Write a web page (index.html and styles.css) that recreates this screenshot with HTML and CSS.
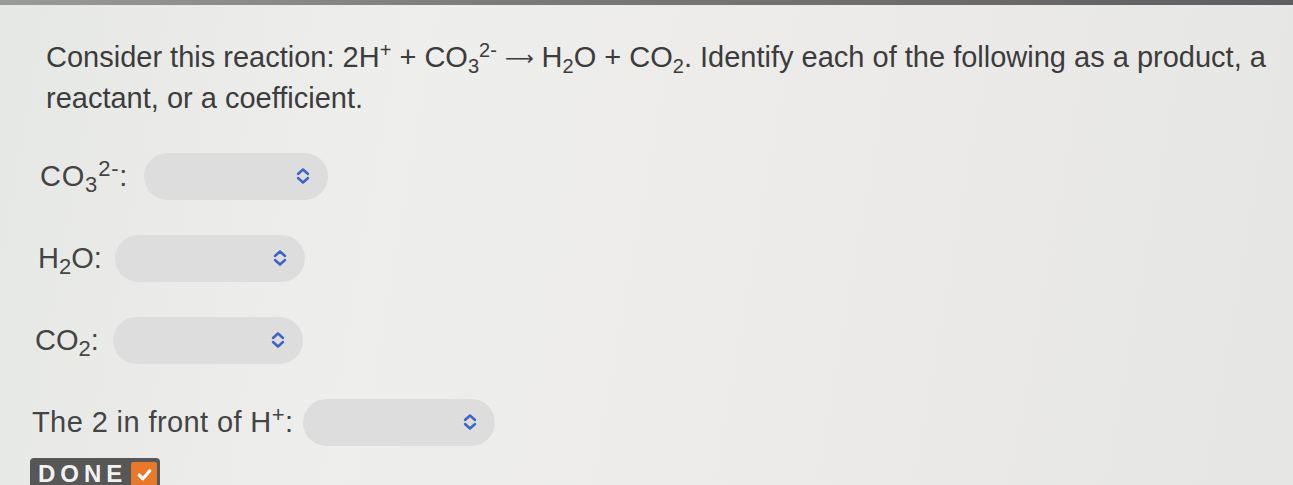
FILE: index.html
```html
<!DOCTYPE html>
<html>
<head>
<meta charset="utf-8">
<link rel="stylesheet" href="styles.css">
</head>
<body>
<div class="topbar"></div>
<main class="page">
  <p class="question">Consider this reaction: 2H<sup>+</sup> + CO<sub>3</sub><sup>2-</sup> <span class="arrow">⟶</span> H<sub>2</sub>O + CO<sub>2</sub>. Identify each of the following as a product, a reactant, or a coefficient.</p>

  <div class="row row-1">
    <span class="label">CO<sub>3</sub><sup>2-</sup>:</span>
    <div class="select">
      <svg class="chev" viewBox="0 0 14 18" width="14" height="18"><path d="M2 7 L7 2.5 L12 7 M2 11 L7 15.5 L12 11" fill="none" stroke="#3d63c4" stroke-width="2.4" stroke-linecap="round" stroke-linejoin="round"/></svg>
    </div>
  </div>

  <div class="row row-2">
    <span class="label">H<sub>2</sub>O:</span>
    <div class="select">
      <svg class="chev" viewBox="0 0 14 18" width="14" height="18"><path d="M2 7 L7 2.5 L12 7 M2 11 L7 15.5 L12 11" fill="none" stroke="#3d63c4" stroke-width="2.4" stroke-linecap="round" stroke-linejoin="round"/></svg>
    </div>
  </div>

  <div class="row row-3">
    <span class="label">CO<sub>2</sub>:</span>
    <div class="select">
      <svg class="chev" viewBox="0 0 14 18" width="14" height="18"><path d="M2 7 L7 2.5 L12 7 M2 11 L7 15.5 L12 11" fill="none" stroke="#3d63c4" stroke-width="2.4" stroke-linecap="round" stroke-linejoin="round"/></svg>
    </div>
  </div>

  <div class="row row-4">
    <span class="label">The 2 in front of H<sup>+</sup>:</span>
    <div class="select">
      <svg class="chev" viewBox="0 0 14 18" width="14" height="18"><path d="M2 7 L7 2.5 L12 7 M2 11 L7 15.5 L12 11" fill="none" stroke="#3d63c4" stroke-width="2.4" stroke-linecap="round" stroke-linejoin="round"/></svg>
    </div>
  </div>

  <button class="done"><span class="done-text">DONE</span><span class="done-check"><svg viewBox="0 0 16 16" width="17" height="17"><path d="M3 8.5 L6.5 12 L13 4.5" fill="none" stroke="#fff" stroke-width="3" stroke-linecap="round" stroke-linejoin="round"/></svg></span></button>
</main>
</body>
</html>
```

FILE: styles.css
```css
html, body {
  margin: 0;
  padding: 0;
}
body {
  width: 1293px;
  height: 485px;
  overflow: hidden;
  background: linear-gradient(100deg, #e6e8e6 0%, #eeeeec 30%, #ecebea 60%, #e6e6e4 100%);
  font-family: "Liberation Sans", Arial, sans-serif;
  color: #3c3c3c;
}
.topbar {
  height: 5px;
  background: linear-gradient(90deg, #9a9a9a 0%, #7a7a7a 40%, #5e5e60 100%);
}
.page {
  padding-top: 32px;
}
.question {
  margin: 0 0 34px 0;
  padding-left: 46px;
  width: 1232px;
  font-size: 29px;
  line-height: 40px;
  letter-spacing: 0;
}
sup, sub {
  font-size: 20px;
  line-height: 0;
}
sup {
  vertical-align: 10px;
}
sub {
  vertical-align: -6px;
}
.label sub, .label sup {
  font-size: 22px;
}
.arrow {
  font-family: "DejaVu Sans", sans-serif;
  font-size: 20px;
  vertical-align: 2px;
}
.row {
  display: flex;
  align-items: center;
  gap: 8px;
  height: 48px;
  margin-bottom: 34px;
  font-size: 29px;
  color: #444;
}
.row-1 { padding-left: 40px; }
.row-1 .label { letter-spacing: 0.8px; }
.row-1 .select { margin-left: 8px; width: 184px; }
.row-2 { padding-left: 38px; }
.row-2 .select { margin-left: 5px; width: 190px; }
.row-3 { padding-left: 35px; }
.row-3 .select { margin-left: 6px; width: 190px; }
.row-4 { padding-left: 32px; margin-bottom: 12px; }
.row-4 .label { letter-spacing: 0.4px; }
.row-4 .select { margin-left: 2px; width: 192px; }
.select {
  width: 188px;
  height: 47px;
  border-radius: 24px;
  background: #dcdddc;
  display: flex;
  align-items: center;
  justify-content: flex-end;
  padding-right: 18px;
  box-sizing: border-box;
}
.chev {
  display: block;
}
.done {
  margin-left: 30px;
  display: flex;
  align-items: center;
  height: 32px;
  padding: 0 3px 0 8px;
  border: none;
  border-radius: 4px;
  background: #575757;
  font-family: "Liberation Sans", Arial, sans-serif;
  font-weight: bold;
  font-size: 24px;
  letter-spacing: 5px;
  color: #f2f2f2;
  cursor: pointer;
}
.done-text {
  padding-right: 4px;
}
.done-check {
  display: flex;
  align-items: center;
  justify-content: center;
  width: 26px;
  height: 24px;
  background: #e8782a;
  border-radius: 2px;
}
.done-check svg {
  display: block;
}
```
